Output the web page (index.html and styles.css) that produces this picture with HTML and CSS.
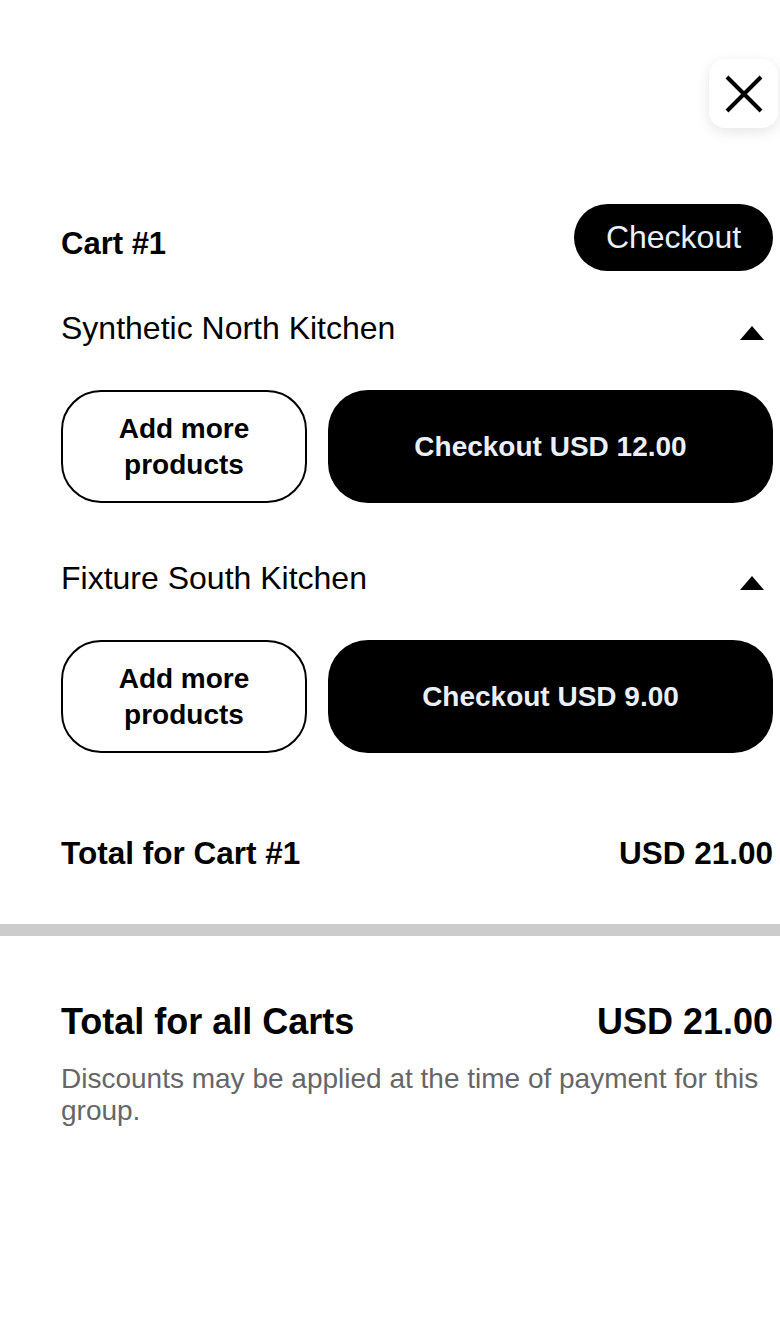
FILE: index.html
```html
<!DOCTYPE html>
<html lang="en">
<head>
<meta charset="utf-8">
<title>Carts</title>
<link rel="stylesheet" href="styles.css">
</head>
<body>
<div class="page">
  <header class="top">
    <button class="close" aria-label="Close">
      <svg width="69" height="69" viewBox="0 0 69 69"><path d="M18 18 L52 52 M52 18 L18 52" stroke="#000" stroke-width="4" fill="none"/></svg>
    </button>
  </header>
  <section class="cart">
    <div class="cart-head">
      <h2 class="cart-title">Cart #1</h2>
      <button class="btn-checkout">Checkout</button>
    </div>
    <div class="kitchen first">
      <span class="kitchen-name">Synthetic North Kitchen</span>
      <svg class="caret" width="24" height="14" viewBox="0 0 24 14"><path d="M12 0 L24 14 L0 14 Z" fill="#000"/></svg>
    </div>
    <div class="actions">
      <button class="btn-add">Add more<br>products</button>
      <button class="btn-pay">Checkout USD 12.00</button>
    </div>
    <div class="kitchen">
      <span class="kitchen-name">Fixture South Kitchen</span>
      <svg class="caret" width="24" height="14" viewBox="0 0 24 14"><path d="M12 0 L24 14 L0 14 Z" fill="#000"/></svg>
    </div>
    <div class="actions">
      <button class="btn-add">Add more<br>products</button>
      <button class="btn-pay">Checkout USD 9.00</button>
    </div>
    <div class="cart-total">
      <span>Total for Cart #1</span>
      <span>USD 21.00</span>
    </div>
  </section>
  <div class="divider"></div>
  <section class="summary">
    <div class="grand-total">
      <span>Total for all Carts</span>
      <span>USD 21.00</span>
    </div>
    <p class="note">Discounts may be applied at the time of payment for this group.</p>
  </section>
</div>
</body>
</html>
```
FILE: styles.css
```css
* { box-sizing: border-box; }
html, body { margin: 0; padding: 0; background: #fff; }
body {
  font-family: "Liberation Sans", Arial, Helvetica, sans-serif;
  color: #000;
  width: 780px;
  overflow-x: hidden;
}
button { font-family: inherit; cursor: pointer; }

.top {
  display: flex;
  justify-content: flex-end;
  padding: 59px 2px 0 0;
  height: 128px;
}
.close {
  width: 69px;
  height: 69px;
  padding: 0;
  border: none;
  background: #fff;
  border-radius: 16px;
  box-shadow: 0 4px 14px rgba(0,0,0,0.10);
  display: flex;
  align-items: center;
  justify-content: center;
}
.close svg { display: block; }

.cart { padding: 0 7px 0 61px; }

.cart-head {
  margin-top: 76px;
  display: flex;
  justify-content: space-between;
  align-items: center;
  height: 67px;
}
.cart-title {
  margin: 0;
  padding-top: 12px;
  font-size: 31px;
  font-weight: 700;
  line-height: 40px;
}
.btn-checkout {
  width: 199px;
  height: 67px;
  border: none;
  border-radius: 34px;
  background: #000;
  color: #eaf0fb;
  font-size: 32px;
  font-weight: 400;
  padding: 0;
}

.kitchen {
  display: flex;
  justify-content: space-between;
  align-items: center;
  margin-top: 55px;
  line-height: 40px;
}
.kitchen.first { margin-top: 37px; }
.kitchen-name { font-size: 32px; }
.caret { margin-right: 9px; margin-top: 9px; display: block; }

.actions {
  margin-top: 42px;
  display: grid;
  grid-template-columns: 246px 1fr;
  gap: 21px;
  height: 113px;
}
.btn-add {
  border: 2px solid #000;
  background: #fff;
  border-radius: 40px;
  font-size: 28px;
  font-weight: 700;
  line-height: 36px;
  color: #000;
  padding: 0;
}
.btn-pay {
  border: none;
  background: #000;
  border-radius: 40px;
  color: #eaf0fb;
  font-size: 28px;
  font-weight: 700;
  padding: 0;
}

.cart-total {
  margin-top: 80px;
  display: flex;
  justify-content: space-between;
  font-size: 31.5px;
  font-weight: 700;
  line-height: 40px;
}

.divider {
  margin-top: 51px;
  height: 12px;
  background: #cccccc;
}

.summary { padding: 64px 7px 0 61px; }
.grand-total {
  display: flex;
  justify-content: space-between;
  font-size: 36px;
  font-weight: 700;
  line-height: 44px;
}
.note {
  margin: 19px 0 0;
  font-size: 28px;
  line-height: 32px;
  color: #666;
}
```
